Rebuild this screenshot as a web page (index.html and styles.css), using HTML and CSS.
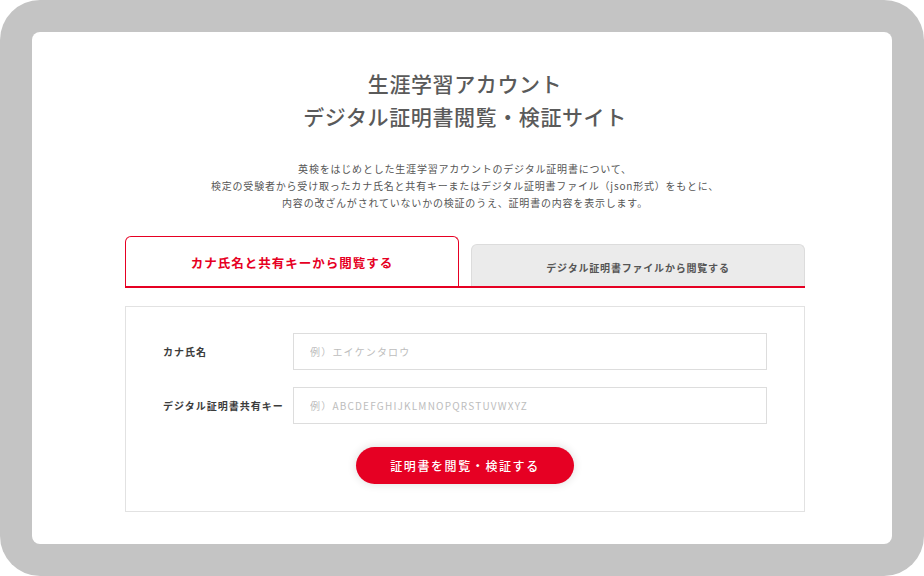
FILE: index.html
```html
<!DOCTYPE html>
<html lang="ja">
<head>
<meta charset="utf-8">
<title>生涯学習アカウント デジタル証明書閲覧・検証サイト</title>
<link rel="stylesheet" href="styles.css">
</head>
<body>
<div class="frame">
  <main class="panel">
    <h1 class="title">生涯学習アカウント<br>デジタル証明書閲覧・検証サイト</h1>
    <p class="desc">英検をはじめとした生涯学習アカウントのデジタル証明書について、<br>検定の受験者から受け取ったカナ氏名と共有キーまたはデジタル証明書ファイル（json形式）をもとに、<br>内容の改ざんがされていないかの検証のうえ、証明書の内容を表示します。</p>
    <div class="content">
      <div class="tabs">
        <div class="tab tab-active">カナ氏名と共有キーから閲覧する</div>
        <div class="tab tab-inactive">デジタル証明書ファイルから閲覧する</div>
      </div>
      <form class="form-box">
        <div class="row">
          <label class="label" for="kana">カナ氏名</label>
          <input class="input" id="kana" type="text" placeholder="例）エイケンタロウ">
        </div>
        <div class="row">
          <label class="label" for="key">デジタル証明書共有キー</label>
          <input class="input" id="key" type="text" placeholder="例）ABCDEFGHIJKLMNOPQRSTUVWXYZ">
        </div>
        <div class="actions">
          <button class="btn" type="button">証明書を閲覧・検証する</button>
        </div>
      </form>
    </div>
  </main>
</div>
</body>
</html>
```
FILE: styles.css
```css
* { box-sizing: border-box; }
html, body { margin: 0; padding: 0; background: #ffffff; }
body {
  font-family: "Noto Sans CJK JP", "Noto Sans", sans-serif;
  color: #555555;
}
.frame {
  width: 924px;
  height: 576px;
  background: #c4c4c4;
  border-radius: 40px;
  padding: 32px;
}
.panel {
  height: 512px;
  background: #ffffff;
  border-radius: 8px;
  padding: 35px 0 0 6px;
}
.title {
  margin: 0;
  font-size: 21px;
  line-height: 33px;
  font-weight: 500;
  letter-spacing: 0.6px;
  color: #5a5a5a;
  text-align: center;
}
.desc {
  margin: 27px 0 0;
  font-size: 10px;
  line-height: 17px;
  letter-spacing: 0.8px;
  color: #555555;
  text-align: center;
}
.content {
  width: 680px;
  margin: 25px auto 0;
}
.tabs {
  display: flex;
  align-items: flex-end;
  gap: 12px;
  border-bottom: 2px solid #e60023;
}
.tab {
  width: 334px;
  display: flex;
  align-items: center;
  justify-content: center;
  font-weight: 700;
  border-radius: 6px 6px 0 0;
}
.tab-active {
  height: 50px;
  border: 1.5px solid #e60023;
  border-bottom: none;
  background: #ffffff;
  color: #e60023;
  font-size: 12.5px;
  letter-spacing: 1px;
  padding-top: 2px;
}
.tab-inactive {
  height: 42px;
  border: 1px solid #dcdcdc;
  border-bottom: none;
  background: #ebebeb;
  color: #555555;
  font-size: 10px;
  letter-spacing: 0.8px;
  padding-top: 3px;
}
.form-box {
  margin: 18px 0 0;
  border: 1px solid #e2e2e2;
  padding: 26px 37px 27px;
}
.row {
  display: grid;
  grid-template-columns: 130px 1fr;
  align-items: center;
  margin-bottom: 17px;
}
.row:last-of-type { margin-bottom: 0; }
.label {
  font-size: 10px;
  font-weight: 700;
  letter-spacing: 1px;
  color: #3c3c3c;
}
.input {
  height: 37px;
  border: 1px solid #dddddd;
  border-radius: 0;
  padding: 0 16px;
  font-family: inherit;
  font-size: 10px;
  letter-spacing: 1.2px;
  color: #333333;
  background: #ffffff;
  outline: none;
}
.input::placeholder { color: #bdbdbd; }
.actions {
  display: flex;
  justify-content: center;
  margin-top: 23px;
}
.btn {
  width: 218px;
  height: 37px;
  border: none;
  border-radius: 19px;
  background: #e60023;
  color: #ffffff;
  font-family: inherit;
  font-size: 12px;
  font-weight: 500;
  letter-spacing: 1.6px;
  box-shadow: 0 0 10px rgba(0, 0, 0, 0.14);
  cursor: pointer;
}
```
